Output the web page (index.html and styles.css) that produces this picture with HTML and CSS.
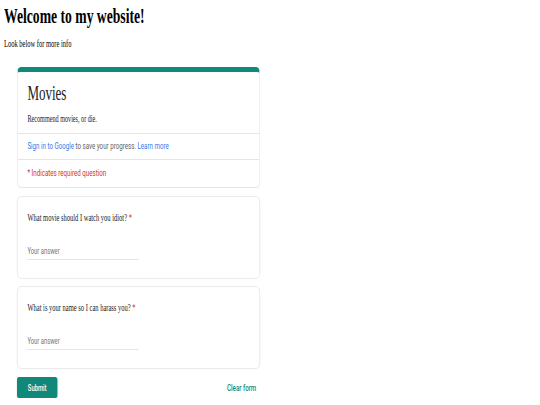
FILE: index.html
```html
<!DOCTYPE html>
<html lang="en">
<head>
<meta charset="utf-8">
<title>Welcome to my website!</title>
<link rel="stylesheet" href="styles.css">
</head>
<body>
<div class="page">
  <h1 class="title narrow">Welcome to my website!</h1>
  <p class="intro narrow">Look below for more info</p>
  <form class="form narrow">
    <section class="card card-head">
      <div class="head-main">
        <div class="form-title">Movies</div>
        <div class="form-desc">Recommend movies, or die.</div>
      </div>
      <div class="head-row signin"><span class="link">Sign in to Google</span> to save your progress. <span class="link">Learn more</span></div>
      <div class="head-row required">* Indicates required question</div>
    </section>
    <section class="card question">
      <div class="q-label">What movie should I watch you idiot? <span class="star">*</span></div>
      <div class="answer">Your answer</div>
    </section>
    <section class="card question">
      <div class="q-label">What is your name so I can harass you? <span class="star">*</span></div>
      <div class="answer">Your answer</div>
    </section>
    <div class="actions">
      <button type="button" class="submit">Submit</button>
      <span class="clear">Clear form</span>
    </div>
  </form>
</div>
</body>
</html>
```
FILE: styles.css
```css
html { overflow: hidden; }
body {
  margin: 0;
  background: #fff;
  font-family: "Liberation Serif", "Times New Roman", serif;
  color: #000;
}
.page {
  padding-left: 4px;
}
.narrow {
  transform: scaleX(0.65);
  transform-origin: 0 0;
}
.title {
  margin: 4px 0 0;
  width: 300px;
  font-size: 21px;
  line-height: 24px;
  font-weight: bold;
}
.intro {
  margin: 10px 0 0;
  width: 200px;
  font-size: 10px;
  line-height: 12px;
}
.form {
  margin: 17px 0 0 13px;
  width: 374px;
}
.card {
  background: #fff;
  border: 1px solid #e3e5e8;
  border-radius: 6px;
  box-sizing: border-box;
}
.card-head {
  border-top: 5px solid #10897a;
}
.head-main {
  padding: 9px 15px 9px;
  border-bottom: 1px solid #e3e5e8;
}
.form-title {
  font-size: 20px;
  line-height: 24px;
  color: #202124;
}
.form-desc {
  margin-top: 9px;
  font-size: 9.5px;
  line-height: 10px;
  color: #202124;
}
.head-row {
  padding: 7px 15px 8px;
  font-family: Roboto, "Liberation Sans", sans-serif;
  font-size: 9.5px;
  line-height: 10px;
  color: #5f6368;
}
.signin { border-bottom: 1px solid #e3e5e8; }
.link { color: #3b78e7; }
.required {
  padding: 8px 15px 9px;
  color: #d93025;
}
.question {
  margin-top: 8px;
  padding: 15px 15px 18px;
}
.question + .question { margin-top: 7px; }
.q-label {
  font-size: 10px;
  line-height: 12px;
  color: #202124;
}
.star { color: #d93025; }
.answer {
  margin-top: 22px;
  width: 171px;
  padding-bottom: 3px;
  border-bottom: 1px solid #e3e5e8;
  font-family: Roboto, "Liberation Sans", sans-serif;
  font-size: 9px;
  line-height: 10px;
  color: #70757a;
}
.actions {
  margin-top: 8px;
  display: flex;
  align-items: center;
  justify-content: space-between;
  padding-right: 6px;
}
.submit {
  width: 62px;
  height: 21px;
  border: none;
  border-radius: 3px;
  background: #10897a;
  color: #fff;
  font-family: Roboto, "Liberation Sans", sans-serif;
  font-weight: 500;
  font-size: 9px;
  padding: 0;
  box-shadow: 0 1px 2px rgba(0,0,0,0.2);
}
.clear {
  font-family: Roboto, "Liberation Sans", sans-serif;
  font-weight: 500;
  font-size: 9.5px;
  color: #10897a;
}
```
